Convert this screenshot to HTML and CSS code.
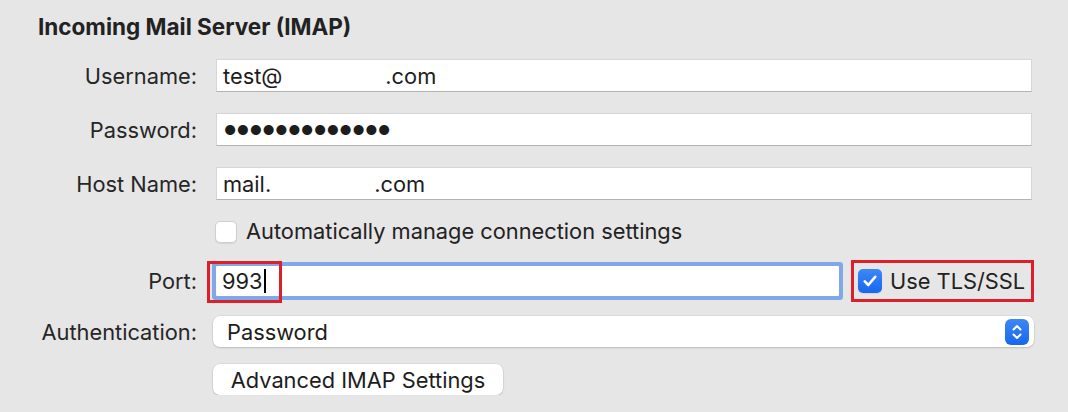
FILE: index.html
```html
<!DOCTYPE html>
<html lang="en">
<head>
    <meta charset="UTF-8">
    <meta name="viewport" content="width=device-width, initial-scale=1.0">
    <title>Incoming Mail Server</title>
    <link rel="stylesheet" href="styles.css">
</head>
<body>
    <div class="panel">
        <h3 class="title">Incoming Mail Server (IMAP)</h3>

        <div class="row">
            <label class="label">Username:</label>
            <div class="field"><span>test@</span><span class="blur user-blur"></span><span>.com</span></div>
        </div>

        <div class="row">
            <label class="label">Password:</label>
            <div class="field dots">●●●●●●●●●●●●●</div>
        </div>

        <div class="row">
            <label class="label">Host Name:</label>
            <div class="field"><span>mail.</span><span class="blur host-blur"></span><span>.com</span></div>
        </div>

        <div class="row check-row">
            <span></span>
            <div class="check-line">
                <span class="box"></span>
                <span>Automatically manage connection settings</span>
            </div>
        </div>

        <div class="row port-row">
            <label class="label">Port:</label>
            <div class="port-line">
                <div class="field focused">
                    <span>993</span><span class="caret"></span>
                    <span class="mark"></span>
                </div>
                <div class="tls">
                    <span class="box checked">
                        <svg width="14" height="12" viewBox="0 0 14 12"><path d="M1.8 6.4 L5.3 10 L12.2 1.8" fill="none" stroke="#fff" stroke-width="2.6" stroke-linecap="round" stroke-linejoin="round"/></svg>
                    </span>
                    <span>Use TLS/SSL</span>
                </div>
            </div>
        </div>

        <div class="row auth-row">
            <label class="label">Authentication:</label>
            <div class="popup">
                <span>Password</span>
                <span class="stepper">
                    <svg width="12" height="18" viewBox="0 0 12 18"><path d="M2.5 6.5 L6 3 L9.5 6.5 M2.5 11.5 L6 15 L9.5 11.5" fill="none" stroke="#fff" stroke-width="2" stroke-linecap="round" stroke-linejoin="round"/></svg>
                </span>
            </div>
        </div>

        <div class="row button-row">
            <span></span>
            <div><button class="btn">Advanced IMAP Settings</button></div>
        </div>
    </div>
</body>
</html>
```

FILE: styles.css
```css
body {
    margin: 0;
    background: #e6e6e6;
    font-family: Inter, "Noto Sans", sans-serif;
    color: #222;
}
.panel {
    padding: 14px 36px 0 38px;
}
.title {
    margin: 0;
    font-size: 22.5px;
    line-height: 26px;
    font-weight: 700;
    color: #222;
}
.row {
    display: grid;
    grid-template-columns: 159px 1fr;
    column-gap: 19px;
    align-items: center;
    margin-top: 21px;
}
.title + .row {
    margin-top: 19px;
}
.label {
    text-align: right;
    font-size: 21.8px;
    color: #262626;
}
.field {
    position: relative;
    height: 33px;
    box-sizing: border-box;
    background: #fff;
    border: 1px solid #d6d6d6;
    border-bottom-color: #b3b3b3;
    padding: 0 6px;
    display: flex;
    align-items: center;
    font-size: 21.8px;
    color: #1d1d1d;
}
.blur {
    display: inline-block;
}
.user-blur {
    width: 103px;
}
.host-blur {
    width: 103px;
}
.dots {
    font-size: 13.4px;
    letter-spacing: 0.6px;
    padding-left: 7px;
}
.check-row {
    margin-top: 20px;
    height: 23px;
}
.check-line, .tls {
    display: flex;
    align-items: center;
    gap: 9px;
    font-size: 21.8px;
    color: #222;
}
.check-line {
    height: 23px;
    line-height: 23px;
}
.box {
    width: 22px;
    height: 22px;
    box-sizing: border-box;
    background: #fff;
    border: 1px solid #cfcfcf;
    border-radius: 5px;
    box-shadow: 0 1px 1px rgba(0, 0, 0, 0.08);
    display: flex;
    align-items: center;
    justify-content: center;
    flex: none;
}
.check-line .box {
    margin-left: -1px;
}
.box.checked {
    width: 24px;
    height: 24px;
    border: none;
    background: linear-gradient(#3d87f7, #1867ef);
}
.port-row {
    margin-top: 17px;
}
.port-line {
    display: flex;
    align-items: center;
    gap: 12px;
    margin-right: -2px;
}
.field.focused {
    flex: 1;
    height: 30px;
    border: none;
    border-radius: 1px;
    box-shadow: 0 0 0 4px #7fa7ea;
    padding-left: 6px;
}
.caret {
    display: inline-block;
    width: 2px;
    height: 24px;
    background: #000;
    margin-left: 1px;
}
.mark {
    position: absolute;
    left: -9px;
    top: -5px;
    width: 75px;
    height: 42px;
    box-sizing: border-box;
    border: 3px solid #dc1f2b;
}
.tls {
    box-sizing: border-box;
    width: 183px;
    height: 42px;
    border: 3px solid #dc1f2b;
    padding-left: 4px;
    gap: 8px;
}
.auth-row {
    margin-top: 14px;
}
.popup {
    height: 31px;
    margin: 0 -2px 0 -3px;
    background: #fff;
    border-radius: 7px;
    box-shadow: 0 0 0 0.5px rgba(0, 0, 0, 0.08), 0 1px 2px rgba(0, 0, 0, 0.15);
    display: flex;
    align-items: center;
    justify-content: space-between;
    padding: 0 5px 0 14px;
    font-size: 21.8px;
    color: #1d1d1d;
}
.stepper {
    width: 24px;
    height: 26px;
    border-radius: 6px;
    background: linear-gradient(#3d87f7, #1867ef);
    display: flex;
    align-items: center;
    justify-content: center;
}
.button-row {
    margin-top: 17px;
}
.btn {
    margin-left: -3px;
    height: 31px;
    width: 290px;
    background: #fff;
    border: none;
    border-radius: 7px;
    box-shadow: 0 0 0 0.5px rgba(0, 0, 0, 0.08), 0 1px 2px rgba(0, 0, 0, 0.15);
    font-family: Inter, "Noto Sans", sans-serif;
    font-size: 21.8px;
    color: #1d1d1d;
    padding: 0;
}
```
